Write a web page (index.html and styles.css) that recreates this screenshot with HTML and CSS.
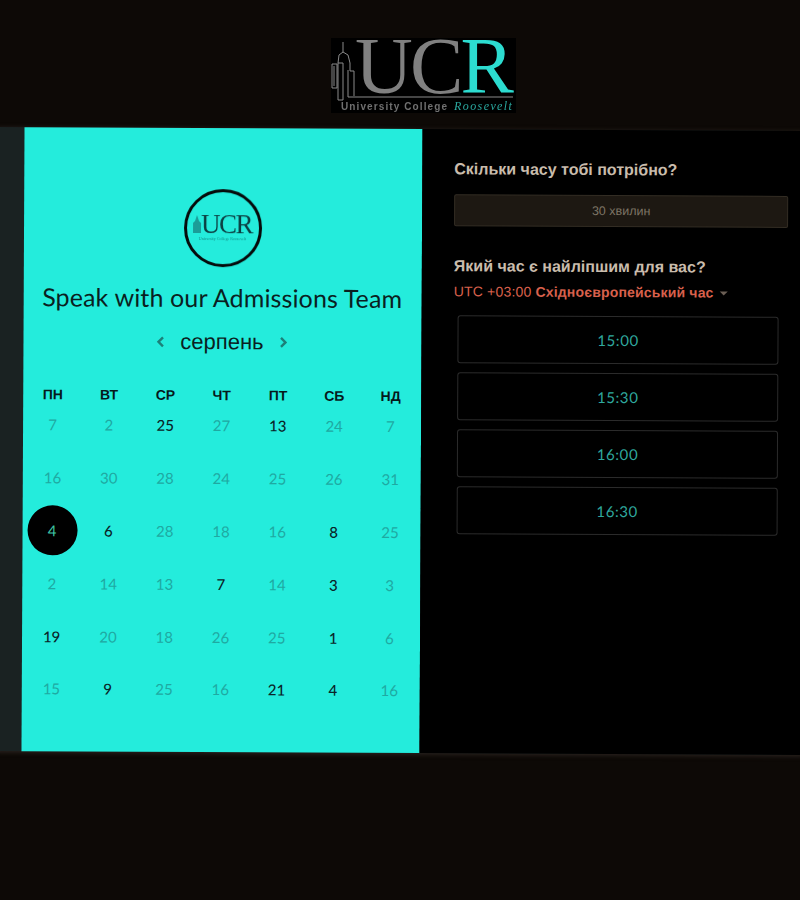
FILE: index.html
```html
<!DOCTYPE html>
<html lang="en">
<head>
    <meta charset="UTF-8">
    <meta name="viewport" content="width=device-width, initial-scale=1.0">
    <title>Speak with our Admissions Team</title>
    <link rel="stylesheet" href="styles.css">
</head>
<body>
    <header class="header">
        <div class="logo">
            <svg class="logo-tower" viewBox="0 0 185 75" width="185" height="75">
                <path d="M12 4V14M12 14L8 17L7 25V62M12 14L17 17L19 25V33M12 25V62M7 62H12M7 25H12M1 26H6V50H1ZM3 28V48M19 33H23V58M17 32V59H182" fill="none" stroke="#8a8a8a" stroke-width="1"/>
            </svg>
            <div class="logo-letters"><span class="logo-uc">UC</span><span class="logo-r">R</span></div>
            <div class="logo-caption"><span>University College</span><em>Roosevelt</em></div>
        </div>
    </header>

    <main class="band">
        <section class="calendar-panel">
            <div class="badge">
                <div class="badge-row">
                    <svg class="badge-tower" viewBox="0 0 8 18" width="8" height="18">
                        <path d="M4 0L6 6L8 8V18H0V8L2 6Z" fill="#1b9c98"/>
                    </svg>
                    <div class="badge-letters">UCR</div>
                </div>
                <div class="badge-caption">University College Roosevelt</div>
            </div>
            <h1 class="title">Speak with our Admissions Team</h1>
            <div class="month-row">
                <svg class="chevron" viewBox="0 0 8 12" width="8" height="12"><path d="M6.5 1.5L2 6L6.5 10.5" fill="none" stroke="currentColor" stroke-width="2.4"/></svg>
                <span class="month">серпень</span>
                <svg class="chevron" viewBox="0 0 8 12" width="8" height="12"><path d="M1.5 1.5L6 6L1.5 10.5" fill="none" stroke="currentColor" stroke-width="2.4"/></svg>
            </div>
            <div class="weekdays">
                <div>ПН</div><div>ВТ</div><div>СР</div><div>ЧТ</div><div>ПТ</div><div>СБ</div><div>НД</div>
            </div>
            <div class="days">
                <div class="day">7</div><div class="day">2</div><div class="day open">25</div><div class="day">27</div><div class="day open">13</div><div class="day">24</div><div class="day">7</div>
                <div class="day">16</div><div class="day">30</div><div class="day">28</div><div class="day">24</div><div class="day">25</div><div class="day">26</div><div class="day">31</div>
                <div class="day"><span class="selected">4</span></div><div class="day open">6</div><div class="day">28</div><div class="day">18</div><div class="day">16</div><div class="day open">8</div><div class="day">25</div>
                <div class="day">2</div><div class="day">14</div><div class="day">13</div><div class="day open">7</div><div class="day">14</div><div class="day open">3</div><div class="day">3</div>
                <div class="day open">19</div><div class="day">20</div><div class="day">18</div><div class="day">26</div><div class="day">25</div><div class="day open">1</div><div class="day">6</div>
                <div class="day">15</div><div class="day open">9</div><div class="day">25</div><div class="day">16</div><div class="day open">21</div><div class="day open">4</div><div class="day">16</div>
            </div>
        </section>

        <section class="times-panel">
            <h2 class="question">Скільки часу тобі потрібно?</h2>
            <div class="duration">30 хвилин</div>
            <h2 class="question second">Який час є найліпшим для вас?</h2>
            <div class="timezone">UTC +03:00 <strong>Східноєвропейський час</strong><span class="caret"></span></div>
            <div class="slots">
                <div class="slot">15:00</div>
                <div class="slot">15:30</div>
                <div class="slot">16:00</div>
                <div class="slot">16:30</div>
            </div>
        </section>
    </main>
</body>
</html>
```

FILE: styles.css
```css
html, body {
    height: 100%;
}

body {
    margin: 0;
    background-color: #0d0906;
    font-family: "Liberation Sans", Arial, sans-serif;
    overflow: hidden;
}

.header {
    height: 129px;
    padding-top: 38px;
    box-sizing: border-box;
    display: flex;
    justify-content: center;
}

.logo {
    position: relative;
    width: 185px;
    height: 75px;
    margin-left: 47px;
    background: #000;
    filter: blur(0.5px);
}

.logo-tower {
    position: absolute;
    left: 0;
    top: 0;
}

.logo-letters {
    height: 57px;
    padding-left: 24px;
    font-family: "Liberation Serif", serif;
    font-size: 80px;
    line-height: 57px;
    letter-spacing: -2.8px;
    white-space: nowrap;
}

.logo-uc {
    color: #808080;
}

.logo-r {
    color: #2cdcd0;
}

.logo-caption {
    display: flex;
    align-items: center;
    gap: 6px;
    height: 14px;
    margin-top: 4px;
    padding-left: 10px;
    color: #707070;
    font-size: 10px;
    font-weight: bold;
    letter-spacing: 1.1px;
    white-space: nowrap;
}

.logo-caption em {
    font-family: "Liberation Serif", serif;
    font-size: 12px;
    font-weight: normal;
    color: #2aa89f;
    letter-spacing: 1.4px;
}

.band {
    width: 808px;
    height: 624px;
    margin-left: -4px;
    padding-left: 26.5px;
    box-sizing: border-box;
    display: flex;
    background: #1a2222;
    transform: rotate(0.28deg);
    transform-origin: 404px 312px;
    box-shadow: 0 1px 5px rgba(70, 60, 55, 0.6);
}

.calendar-panel {
    width: 398px;
    flex-shrink: 0;
    box-sizing: border-box;
    padding-top: 61px;
    background: #24ecdc;
    color: #0a1f22;
}

.badge {
    width: 78px;
    height: 78px;
    box-sizing: border-box;
    margin: 0 auto;
    border: 3px solid #050a0a;
    border-radius: 50%;
    display: flex;
    flex-direction: column;
    align-items: center;
    justify-content: center;
    filter: blur(0.3px);
}

.badge-row {
    display: flex;
    align-items: flex-end;
    height: 20px;
    margin-top: -2px;
}

.badge-tower {
    margin-bottom: 1px;
}

.badge-letters {
    font-family: "Liberation Serif", serif;
    font-size: 27px;
    line-height: 20px;
    letter-spacing: -1.5px;
    color: #0b3f42;
}

.badge-caption {
    margin-top: 2px;
    font-family: "Liberation Serif", serif;
    font-size: 4px;
    line-height: 5px;
    color: #148a86;
    white-space: nowrap;
}

.title {
    margin: 15px 0 0;
    font-family: Lato, sans-serif;
    font-size: 25px;
    font-weight: 400;
    letter-spacing: 0.13px;
    line-height: 30px;
    text-align: center;
    white-space: nowrap;
}

.month-row {
    height: 30px;
    margin-top: 15px;
    display: flex;
    align-items: center;
    justify-content: center;
    gap: 16px;
    color: #1c8079;
}

.month {
    font-size: 22px;
    color: #0a1f22;
}

.weekdays,
.days {
    display: grid;
    grid-template-columns: repeat(7, 56.3px);
    justify-content: center;
    text-align: center;
}

.weekdays {
    margin-top: 30px;
    font-size: 14px;
    font-weight: bold;
    line-height: 16px;
    color: #06191b;
}

.days {
    grid-auto-rows: 52.9px;
    font-family: Lato, sans-serif;
    font-size: 15px;
}

.day {
    height: 44px;
    display: flex;
    align-items: center;
    justify-content: center;
    color: #1fa9a2;
}

.day.open {
    color: #0a2528;
    font-weight: 500;
}

.selected {
    flex-shrink: 0;
    width: 50px;
    height: 50px;
    border-radius: 50%;
    background: #000;
    color: #3fc4a4;
    display: flex;
    align-items: center;
    justify-content: center;
}

.times-panel {
    flex: 1;
    box-sizing: border-box;
    padding: 30px 0 0 32.5px;
    background: #000;
}

.question {
    margin: 0;
    font-size: 16px;
    font-weight: bold;
    line-height: 20px;
    color: #c9bcac;
}

.question.second {
    margin-top: 30px;
}

.duration {
    width: 334px;
    height: 32px;
    margin-top: 15px;
    box-sizing: border-box;
    border: 1px solid #332d24;
    border-radius: 2px;
    background: #1d1812;
    color: #7e7566;
    font-size: 12.5px;
    line-height: 30px;
    text-align: center;
}

.timezone {
    margin-top: 6px;
    font-size: 14px;
    letter-spacing: 0.18px;
    line-height: 18px;
    color: #d8604c;
}

.caret {
    display: inline-block;
    margin-left: 6px;
    vertical-align: 2px;
    border-left: 4px solid transparent;
    border-right: 4px solid transparent;
    border-top: 4px solid #6b5f55;
}

.slots {
    width: 321px;
    margin: 15px 0 0 4px;
    display: flex;
    flex-direction: column;
    gap: 9px;
}

.slot {
    height: 48px;
    box-sizing: border-box;
    border: 1px solid #2b2b2b;
    border-radius: 3px;
    color: #2fa89e;
    font-family: Lato, sans-serif;
    font-size: 15px;
    letter-spacing: 0.6px;
    line-height: 46px;
    text-align: center;
}
```
